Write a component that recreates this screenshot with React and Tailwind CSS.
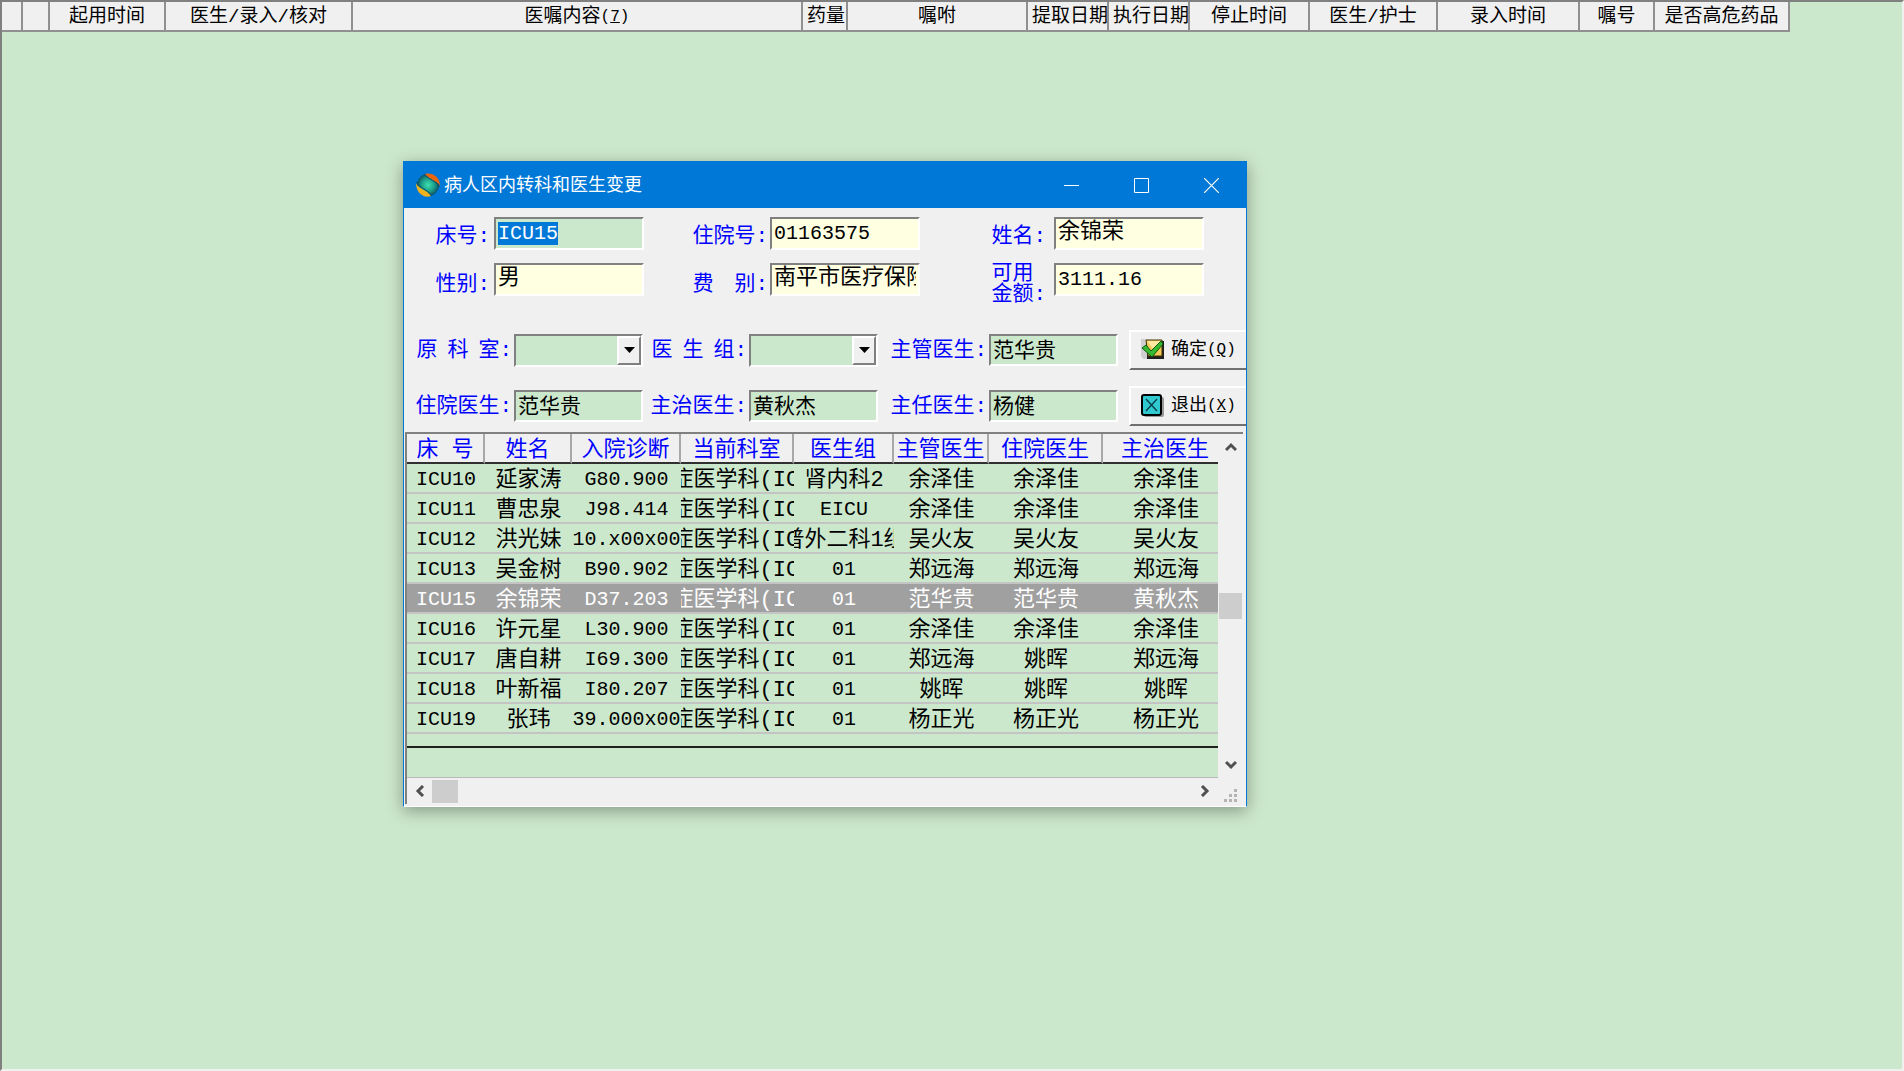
import { useEffect, useRef } from 'react';

const orderColumns = [
  { title: '', width: 21 },
  { title: '', width: 27 },
  { title: '起用时间', width: 116 },
  { title: '医生/录入/核对', width: 187 },
  { title: '医嘱内容', hotkey: '7', width: 450 },
  { title: '药量', width: 45, tight: true },
  { title: '嘱咐', width: 180 },
  { title: '提取日期', width: 81, tight: true },
  { title: '执行日期', width: 81, tight: true },
  { title: '停止时间', width: 120 },
  { title: '医生/护士', width: 128 },
  { title: '录入时间', width: 142 },
  { title: '嘱号', width: 75 },
  { title: '是否高危药品', width: 135 },
];

const patientColumns = [
  { title: '床 号', width: 78 },
  { title: '姓名', width: 87 },
  { title: '入院诊断', width: 109 },
  { title: '当前科室', width: 113 },
  { title: '医生组', width: 100 },
  { title: '主管医生', width: 95 },
  { title: '住院医生', width: 114 },
  { title: '主治医生', width: 126 },
];

const dept = '重症医学科(ICU)';

const patients = [
  ['ICU10', '延家涛', 'G80.900', dept, '肾内科2', '余泽佳', '余泽佳', '余泽佳'],
  ['ICU11', '曹忠泉', 'J98.414', dept, 'EICU', '余泽佳', '余泽佳', '余泽佳'],
  ['ICU12', '洪光妹', '10.x00x00', dept, '普外二科1组', '吴火友', '吴火友', '吴火友'],
  ['ICU13', '吴金树', 'B90.902', dept, '01', '郑远海', '郑远海', '郑远海'],
  ['ICU15', '余锦荣', 'D37.203', dept, '01', '范华贵', '范华贵', '黄秋杰'],
  ['ICU16', '许元星', 'L30.900', dept, '01', '余泽佳', '余泽佳', '余泽佳'],
  ['ICU17', '唐自耕', 'I69.300', dept, '01', '郑远海', '姚晖', '郑远海'],
  ['ICU18', '叶新福', 'I80.207', dept, '01', '姚晖', '姚晖', '姚晖'],
  ['ICU19', '张玮', '39.000x00', dept, '01', '杨正光', '杨正光', '杨正光'],
];

const isLatin = (text) => /^[\x20-\x7e]+$/.test(text);

const sunken = 'border-2 border-t-[#808080] border-l-[#808080] border-r-white border-b-white outline-none';

function Label({ id, children, className = 'pr-0.5' }) {
  return (
    <label
      htmlFor={id}
      className={`self-center justify-self-end text-[21px] leading-[21px] whitespace-pre text-[#0000ff] ${className}`}
    >
      {children}
    </label>
  );
}

function InfoInput({ id, value, inputRef, tone = 'bg-[#ffffe1]' }) {
  return (
    <input
      id={id}
      ref={inputRef}
      type="text"
      defaultValue={value}
      className={`h-[33px] w-full min-w-0 px-0.5 text-black selection:bg-[#0078d7] selection:text-white ${isLatin(value) ? 'text-[20px]' : 'pb-0.5 text-[22px]'} ${sunken} ${tone}`}
    />
  );
}

function DoctorInput({ id, value }) {
  return (
    <input
      id={id}
      type="text"
      defaultValue={value}
      className={`h-8 w-full min-w-0 bg-[#cce8cc] px-0.5 pb-1 text-[21px] text-black ${sunken}`}
    />
  );
}

function Combo({ id }) {
  return (
    <div className="relative">
      <select id={id} className={`block h-[33px] w-full appearance-none bg-[#cce8cc] ${sunken}`}>
        <option></option>
      </select>
      <span className="pointer-events-none absolute inset-y-0.5 right-0.5 flex w-6 items-center justify-center border-2 border-t-white border-r-[#808080] border-b-[#808080] border-l-white bg-[#f0f0f0]">
        <svg width="11" height="6" viewBox="0 0 11 6">
          <path d="M0 0h11L5.500 6z" fill="#000" />
        </svg>
      </span>
    </div>
  );
}

function PushButton({ icon, text, hotkey }) {
  return (
    <button
      type="button"
      className="flex h-10 w-full items-center gap-1.5 border-t-2 border-b-2 border-l-2 border-t-white border-b-[#707070] border-l-white bg-[#f0f0f0] pl-2.5 text-[18px] leading-none whitespace-nowrap text-black"
    >
      {icon}
      <span className="flex items-center">
        {text}
        <span className="text-[16px]">(<u>{hotkey}</u>)</span>
      </span>
    </button>
  );
}

function AppIcon() {
  return (
    <svg width="24" height="24" viewBox="0 0 24 24">
      <defs>
        <radialGradient id="globe" cx="50%" cy="50%" r="55%">
          <stop offset="0" stopColor="#3ee0b0" />
          <stop offset="0.55" stopColor="#1b9c88" />
          <stop offset="1" stopColor="#06405c" />
        </radialGradient>
      </defs>
      <circle cx="12" cy="12" r="11" fill="url(#globe)" />
      <path d="M9 1C15 -1 24 3 24 13C22 8 14 7 9 1z" fill="#ec640c" />
      <path d="M0 10C2 16 10 16 15 23C7 26 0 19 0 10z" fill="#f3b11e" />
      <path d="M8 1C13 7 21 8 23.500 14" fill="none" stroke="#0b4a66" />
      <path d="M.5 9C3 15 11 16 16 23" fill="none" stroke="#0b4a66" />
    </svg>
  );
}

function OkIcon() {
  return (
    <svg width="24" height="22" viewBox="0 0 24 22">
      <path d="M0 0h6v20H2L0 17z" fill="#d0d0d0" />
      <path d="M6 2h17v18H6z" fill="#202020" />
      <path d="M5 1h16v16H7z" fill="#f6c95a" stroke="#3a3000" />
      <path d="M6 2h14L13 11z" fill="#ffe9a0" />
      <path d="M1 9l4-3 5 6L20 2l2 3L11 18z" fill="#35b92f" stroke="#115a12" />
    </svg>
  );
}

function ExitIcon() {
  return (
    <svg width="24" height="24" viewBox="0 0 24 24">
      <rect x="3" y="3" width="20" height="20" rx="2" fill="#9a9a9a" />
      <rect x="1" y="1" width="19" height="20" rx="2" fill="#2fc9cf" stroke="#000" strokeWidth="2" />
      <path d="M5 5l11 12M16 5L5 17" stroke="#063c46" strokeWidth="1.300" />
    </svg>
  );
}

function Chevron({ d, label, className }) {
  return (
    <button type="button" aria-label={label} className={`flex items-center justify-center ${className}`}>
      <svg width="12" height="12" viewBox="0 0 12 12" fill="none" stroke="#505050" strokeWidth="3">
        <path d={d} />
      </svg>
    </button>
  );
}

function OrderHeader() {
  return (
    <table className="w-[1788px] table-fixed border-separate border-spacing-0 self-start text-[19px]">
      <colgroup>
        {orderColumns.map((col, i) => (
          <col key={i} style={{ width: col.width }} />
        ))}
      </colgroup>
      <thead>
        <tr className="bg-[#f0f0f0]">
          {orderColumns.map((col, i) => (
            <th key={i} className="border-r-2 border-b-2 border-[#909090] p-0 font-normal">
              <div className={`flex h-7 items-center overflow-hidden pt-0.5 whitespace-nowrap ${col.tight ? 'pl-1' : 'justify-center'}`}>
                {col.title}
                {col.hotkey && <span className="text-[16px]">(<u>{col.hotkey}</u>)</span>}
              </div>
            </th>
          ))}
        </tr>
      </thead>
    </table>
  );
}

function TitleBar() {
  return (
    <header className="flex h-[46px] items-center bg-[#0078d7] pl-3 text-white">
      <AppIcon />
      <h1 className="flex-1 pt-0.5 pl-1 text-[18px]">病人区内转科和医生变更</h1>
      <button type="button" aria-label="最小化" className="flex h-full w-[70px] items-center justify-center">
        <svg width="15" height="15" viewBox="0 0 15 15"><path d="M0 7.500h15" stroke="#fff" /></svg>
      </button>
      <button type="button" aria-label="最大化" className="flex h-full w-[70px] items-center justify-center">
        <svg width="15" height="15" viewBox="0 0 15 15"><path d="M.5 .5h14v14H.5z" fill="none" stroke="#fff" /></svg>
      </button>
      <button type="button" aria-label="关闭" className="flex h-full w-[70px] items-center justify-center">
        <svg width="15" height="15" viewBox="0 0 15 15"><path d="M0 0l15 15M15 0L0 15" stroke="#fff" strokeWidth="1.200" /></svg>
      </button>
    </header>
  );
}

function PatientForm() {
  const bedRef = useRef(null);

  useEffect(() => {
    bedRef.current.focus();
    bedRef.current.select();
  }, []);

  return (
    <form className="pt-[9px]">
      <div className="grid grid-cols-[90px_150px_126px_150px_134px_150px] gap-y-[13px]">
        <Label id="bed" className="pt-1.5 pr-1">床号:</Label>
        <InfoInput id="bed" value="ICU15" inputRef={bedRef} tone="bg-[#cce8cc]" />
        <Label id="admission" className="pt-1.5 pr-0.5">住院号:</Label>
        <InfoInput id="admission" value="01163575" />
        <Label id="name" className="pt-1.5 pr-2">姓名:</Label>
        <InfoInput id="name" value="余锦荣" />
        <Label id="sex" className="pr-1">性别:</Label>
        <InfoInput id="sex" value="男" />
        <Label id="fee">费{'　'}别:</Label>
        <InfoInput id="fee" value="南平市医疗保险" />
        <Label id="balance" className="pr-2">{'可用\n金额:'}</Label>
        <InfoInput id="balance" value="3111.16" />
      </div>
      <div className="grid grid-cols-[110px_129px_106px_129px_111px_129px_11px_1fr] items-center gap-y-4 pt-[25px]">
        <Label id="dept" className="flex gap-2.5 pr-0.5">
          <span>原</span><span>科</span><span>室:</span>
        </Label>
        <Combo id="dept" />
        <Label id="group" className="flex gap-2.5 pr-0.5">
          <span>医</span><span>生</span><span>组:</span>
        </Label>
        <Combo id="group" />
        <Label id="chief">主管医生:</Label>
        <DoctorInput id="chief" value="范华贵" />
        <div className="col-start-8"><PushButton icon={<OkIcon />} text="确定" hotkey="Q" /></div>
        <Label id="resident">住院医生:</Label>
        <DoctorInput id="resident" value="范华贵" />
        <Label id="attending">主治医生:</Label>
        <DoctorInput id="attending" value="黄秋杰" />
        <Label id="director">主任医生:</Label>
        <DoctorInput id="director" value="杨健" />
        <div className="col-start-8"><PushButton icon={<ExitIcon />} text="退出" hotkey="X" /></div>
      </div>
    </form>
  );
}

function PatientGrid() {
  return (
    <section className="mt-1.5 mr-[3px] ml-px flex flex-col border-t-2 border-l-2 border-[#808080]">
      <div className="flex">
        <div className="min-w-0 flex-1 overflow-hidden bg-[#cce8cc]">
          <table className="w-[822px] table-fixed border-separate border-spacing-0 text-[22px]">
            <colgroup>
              {patientColumns.map((col) => (
                <col key={col.title} style={{ width: col.width }} />
              ))}
            </colgroup>
            <thead>
              <tr className="bg-[#f0f0f0] text-[#0000ff]">
                {patientColumns.map((col) => (
                  <th key={col.title} className="border-r-2 border-b-2 border-r-[#a8a8a8] border-b-[#303030] p-0 font-normal">
                    <div className="flex h-7 items-center justify-center overflow-hidden pt-1 whitespace-nowrap">{col.title}</div>
                  </th>
                ))}
              </tr>
            </thead>
            <tbody>
              {patients.map((row) => (
                <tr key={row[0]} className={row[0] === 'ICU15' ? 'bg-[#a0a0a0] text-white' : 'text-black'}>
                  {row.map((cell, i) => (
                    <td key={i} className="border-b-2 border-[#c4c4c4] p-0">
                      <div className={`flex h-7 items-center justify-center overflow-hidden pt-1 whitespace-nowrap ${isLatin(cell) ? 'text-[20px]' : ''}`}>
                        {cell}
                      </div>
                    </td>
                  ))}
                </tr>
              ))}
            </tbody>
          </table>
          <div className="h-[14px] border-b-2 border-[#202020]" />
          <div className="h-[30px] border-b border-[#b8b8b8]" />
        </div>
        <div className="flex w-[25px] flex-col items-center">
          <Chevron d="M1 9l5-5 5 5" label="上" className="h-[26px] w-full" />
          <div className="flex-1" />
          <div className="h-[26px] w-[23px] bg-[#cdcdcd]" />
          <div className="flex-1" />
          <Chevron d="M1 3l5 5 5-5" label="下" className="h-[26px] w-full" />
        </div>
      </div>
      <div className="flex h-[26px] items-center">
        <Chevron d="M9 1L4 6l5 5" label="左" className="h-full w-[25px]" />
        <div className="h-[23px] w-[26px] bg-[#cdcdcd]" />
        <div className="flex-1" />
        <Chevron d="M3 1l5 5-5 5" label="右" className="h-full w-[26px]" />
        <div className="flex h-full w-[25px] items-end justify-center pb-0.5">
          <svg width="13" height="13" viewBox="0 0 13 13" fill="#b4b4b4">
            <path d="M10 0h3v3h-3zM5 5h3v3H5zM10 5h3v3h-3zM0 10h3v3H0zM5 10h3v3H5zM10 10h3v3h-3z" />
          </svg>
        </div>
      </div>
    </section>
  );
}

export default function App() {
  return (
    <main className="relative flex min-h-screen flex-col overflow-hidden border-2 border-t-[#808080] border-r-[#f0f0f0] border-b-[#f0f0f0] border-l-[#808080] bg-[#cce8cc] font-['Liberation_Mono','Noto_Sans_CJK_SC',monospace] text-black">
      <OrderHeader />
      <div
        role="dialog"
        aria-label="病人区内转科和医生变更"
        className="absolute top-[159px] left-[401px] w-[844px] border border-[#0078d7] border-b-white bg-[#f0f0f0] pb-0.5 shadow-[0_4px_16px_rgba(0,0,0,0.35)]"
      >
        <TitleBar />
        <PatientForm />
        <PatientGrid />
      </div>
    </main>
  );
}
